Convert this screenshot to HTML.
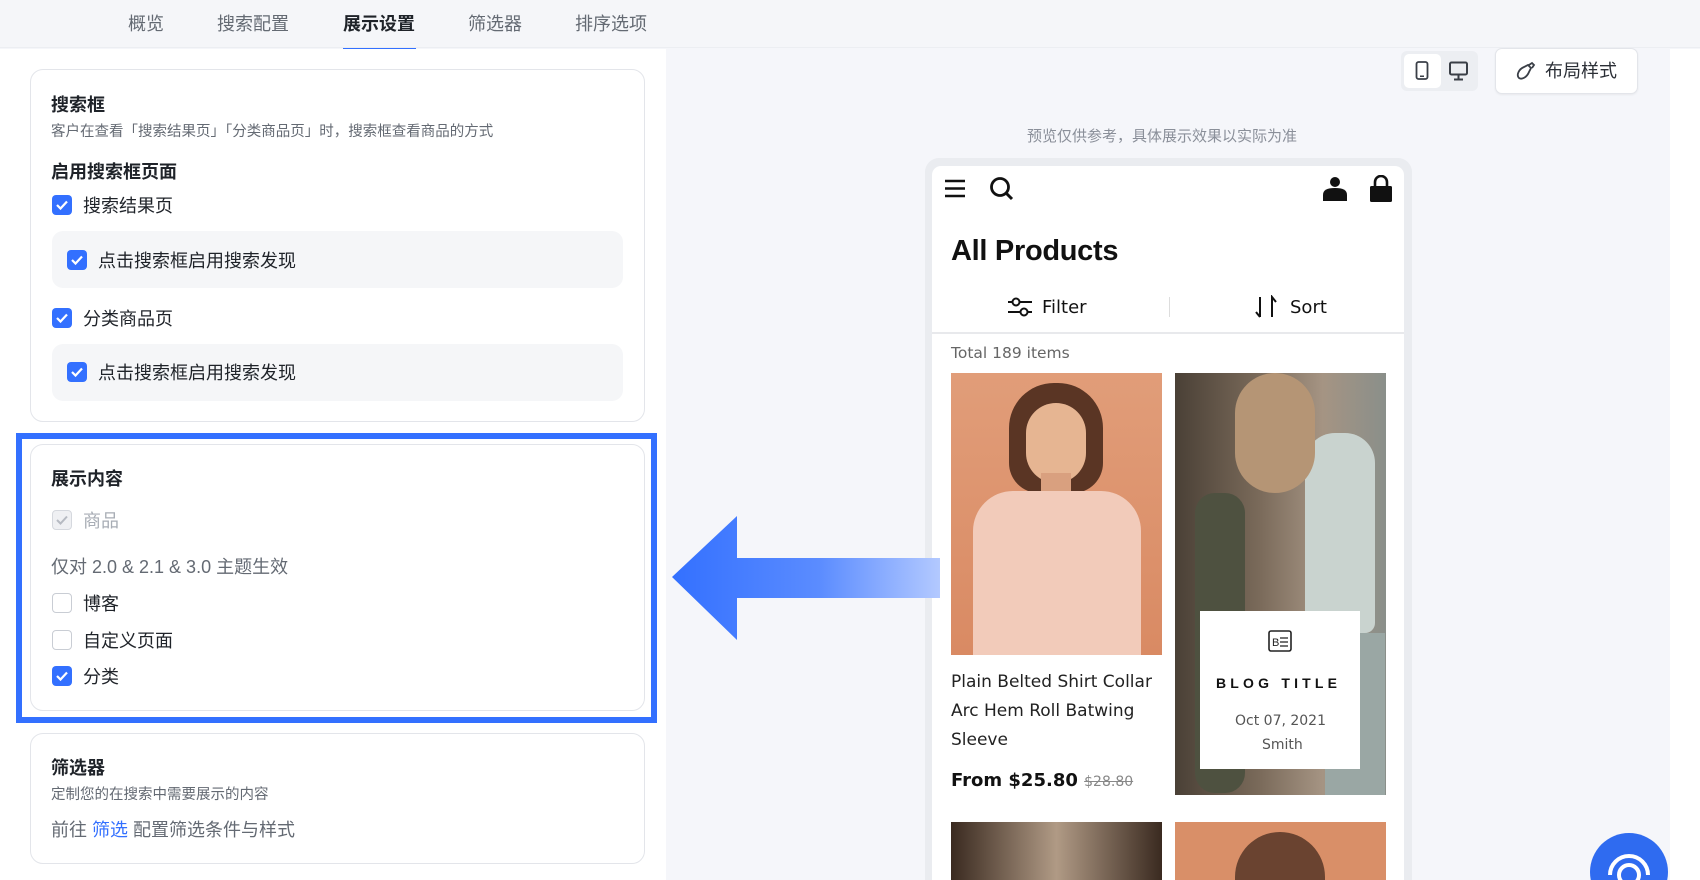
<!DOCTYPE html>
<html style="width:1700px;height:880px;overflow:hidden"><head><meta charset="utf-8">
<style>
*{margin:0;padding:0;box-sizing:border-box}
body{width:1700px;height:880px;overflow:hidden;position:relative;background:#f5f6fa;font-family:"Liberation Sans","Noto Sans CJK SC",sans-serif;color:#1f2329}
.a{position:absolute}
.t{position:absolute;white-space:nowrap;line-height:1}
.card{position:absolute;background:#fff;border:1.5px solid #e3e5ea;border-radius:13px}
.cb{position:absolute;width:20px;height:20px;border-radius:4px;background:#3370ff}
.cb svg{position:absolute;left:3px;top:4px}
.cbo{position:absolute;width:20px;height:20px;border-radius:4px;border:1.5px solid #c9cdd4;background:#fff}
.grey{position:absolute;background:#f5f6f8;border-radius:11px}
.b{font-weight:bold}
.pop{font-family:"DejaVu Sans","Liberation Sans",sans-serif}
#clip{position:absolute;left:0;top:0;width:1700px;height:880px;overflow:hidden}
</style></head><body><div id="clip">
<div class="a" style="left:0;top:0;width:1700px;height:48px;background:#f5f6f9;border-bottom:1px solid #eceef2"></div>
<div class="t" style="left:128px;top:15px;font-size:18px;color:#646a73">概览</div>
<div class="t" style="left:217px;top:15px;font-size:18px;color:#646a73">搜索配置</div>
<div class="t b" style="left:343px;top:15px;font-size:18px;color:#1f2329">展示设置</div>
<div class="a" style="left:343px;top:48px;width:73px;height:3px;background:#3370ff"></div>
<div class="t" style="left:468px;top:15px;font-size:18px;color:#646a73">筛选器</div>
<div class="t" style="left:575px;top:15px;font-size:18px;color:#646a73">排序选项</div>
<div class="a" style="left:0;top:49px;width:666px;height:831px;background:#fff"></div>
<div class="a" style="left:1670px;top:49px;width:30px;height:831px;background:#fff"></div>

<div class="card" style="left:30px;top:69px;width:615px;height:353px"></div>
<div class="t b" style="left:51px;top:96px;font-size:18px">搜索框</div>
<div class="t" style="left:51px;top:125px;font-size:14.5px;color:#646a73">客户在查看「搜索结果页」「分类商品页」时，搜索框查看商品的方式</div>
<div class="t b" style="left:51px;top:163px;font-size:18px">启用搜索框页面</div>
<div class="cb" style="left:52px;top:195px"><svg width="14" height="12"><path d="M2 6l3.5 3.5L12 2.5" stroke="#fff" stroke-width="2.2" fill="none"/></svg></div>
<div class="t" style="left:83px;top:197px;font-size:18px;color:#1f2329">搜索结果页</div>
<div class="grey" style="left:52px;top:231px;width:571px;height:57px"></div>
<div class="cb" style="left:67px;top:250px"><svg width="14" height="12"><path d="M2 6l3.5 3.5L12 2.5" stroke="#fff" stroke-width="2.2" fill="none"/></svg></div>
<div class="t" style="left:98px;top:252px;font-size:18px">点击搜索框启用搜索发现</div>
<div class="cb" style="left:52px;top:308px"><svg width="14" height="12"><path d="M2 6l3.5 3.5L12 2.5" stroke="#fff" stroke-width="2.2" fill="none"/></svg></div>
<div class="t" style="left:83px;top:310px;font-size:18px">分类商品页</div>
<div class="grey" style="left:52px;top:344px;width:571px;height:57px"></div>
<div class="cb" style="left:67px;top:362px"><svg width="14" height="12"><path d="M2 6l3.5 3.5L12 2.5" stroke="#fff" stroke-width="2.2" fill="none"/></svg></div>
<div class="t" style="left:98px;top:364px;font-size:18px">点击搜索框启用搜索发现</div>

<div class="a" style="left:16px;top:433px;width:641px;height:290px;border:6px solid #3370ff"></div>
<div class="card" style="left:30px;top:444px;width:615px;height:267px"></div>
<div class="t b" style="left:51px;top:470px;font-size:18px">展示内容</div>
<div class="a" style="left:52px;top:510px;width:20px;height:20px;border-radius:4px;background:#eff0f3;border:1.5px solid #d5d8de"><svg width="14" height="12" style="position:absolute;left:2px;top:3px"><path d="M2 6l3.5 3.5L12 2.5" stroke="#b6bac2" stroke-width="2" fill="none"/></svg></div>
<div class="t" style="left:83px;top:512px;font-size:18px;color:#a8adb5">商品</div>
<div class="t" style="left:51px;top:558px;font-size:18px;color:#646a73">仅对 2.0 &amp; 2.1 &amp; 3.0 主题生效</div>
<div class="cbo" style="left:52px;top:593px"></div>
<div class="t" style="left:83px;top:595px;font-size:18px">博客</div>
<div class="cbo" style="left:52px;top:630px"></div>
<div class="t" style="left:83px;top:632px;font-size:18px">自定义页面</div>
<div class="cb" style="left:52px;top:666px"><svg width="14" height="12"><path d="M2 6l3.5 3.5L12 2.5" stroke="#fff" stroke-width="2.2" fill="none"/></svg></div>
<div class="t" style="left:83px;top:668px;font-size:18px">分类</div>

<div class="card" style="left:30px;top:733px;width:615px;height:131px"></div>
<div class="t b" style="left:51px;top:759px;font-size:18px">筛选器</div>
<div class="t" style="left:51px;top:788px;font-size:14.5px;color:#646a73">定制您的在搜索中需要展示的内容</div>
<div class="t" style="left:51px;top:821px;font-size:18px;color:#646a73">前往 <span style="color:#3370ff">筛选</span> 配置筛选条件与样式</div>

<div class="a" style="left:1401px;top:51px;width:77px;height:40px;background:#eceef2;border-radius:6px"></div>
<div class="a" style="left:1404px;top:54px;width:37px;height:34px;background:#fff;border-radius:5px"></div>
<svg class="a" style="left:1413px;top:61px" width="18" height="20"><rect x="3.5" y="1" width="11" height="17" rx="2" fill="none" stroke="#3a3f47" stroke-width="1.8"/><rect x="7" y="14.5" width="4" height="1.5" fill="#3a3f47"/></svg>
<svg class="a" style="left:1448px;top:61px" width="22" height="20"><rect x="2" y="1.5" width="17" height="12" rx="1.5" fill="none" stroke="#3a3f47" stroke-width="2"/><path d="M10.5 14v4M6 18.5h9" stroke="#3a3f47" stroke-width="2"/></svg>
<div class="a" style="left:1495px;top:48px;width:143px;height:46px;background:#fff;border:1px solid #e3e5ea;border-radius:7px;box-shadow:0 1px 2px rgba(0,0,0,.06)"></div>
<svg class="a" style="left:1515px;top:61px" width="22" height="20"><path d="M4 17c-3-3 0-9 5-11l4-2 3 3-2 4c-2 5-7 8-10 6z M14 4l3-2 2 2-2 3" fill="none" stroke="#3a3f47" stroke-width="1.8"/></svg>
<div class="t" style="left:1545px;top:62px;font-size:18px;color:#2b2f36">布局样式</div>

<div class="t" style="left:1027px;top:129px;font-size:15px;color:#8a8f99">预览仅供参考，具体展示效果以实际为准</div>

<div class="a" style="left:925px;top:158px;width:487px;height:722px;background:#eaecf0;border-radius:14px 14px 0 0"></div>
<div class="a" style="left:932px;top:166px;width:472px;height:714px;background:#fff;border-radius:9px 9px 0 0"></div>
<svg class="a" style="left:944px;top:178px" width="24" height="22"><path d="M1 3h20M1 10.5h20M1 18h20" stroke="#111" stroke-width="2.6"/></svg>
<svg class="a" style="left:989px;top:176px" width="28" height="28"><circle cx="11" cy="11" r="8.5" fill="none" stroke="#111" stroke-width="2.8"/><path d="M17 17l6 6" stroke="#111" stroke-width="3"/></svg>
<svg class="a" style="left:1322px;top:176px" width="26" height="26"><circle cx="13" cy="6" r="5" fill="#111"/><path d="M1 25v-6c0-5 4-7 12-7s12 2 12 7v6z" fill="#111"/></svg>
<svg class="a" style="left:1368px;top:175px" width="26" height="28"><path d="M7 11V7a6 6 0 0 1 12 0v4" fill="none" stroke="#111" stroke-width="2.6"/><rect x="2" y="11" width="22" height="16" rx="1.5" fill="#111"/></svg>
<div class="t b" style="left:951px;top:237px;font-size:29px;color:#111;letter-spacing:-0.3px">All Products</div>
<svg class="a" style="left:1007px;top:296px" width="26" height="22"><path d="M1 6h24M1 16h24" stroke="#111" stroke-width="2"/><circle cx="9" cy="6" r="3.5" fill="#fff" stroke="#111" stroke-width="2"/><circle cx="17" cy="16" r="3.5" fill="#fff" stroke="#111" stroke-width="2"/></svg>
<div class="t pop" style="left:1042px;top:299px;font-size:18px;color:#111">Filter</div>
<div class="a" style="left:1169px;top:297px;width:1px;height:20px;background:#ddd"></div>
<svg class="a" style="left:1254px;top:295px" width="24" height="24"><path d="M6 2v20M2 17l4 5M18 22V2l4 5" fill="none" stroke="#111" stroke-width="2"/></svg>
<div class="t pop" style="left:1290px;top:299px;font-size:18px;color:#111">Sort</div>
<div class="a" style="left:932px;top:332px;width:472px;height:2px;background:#e8e9ec"></div>
<div class="t pop" style="left:951px;top:346px;font-size:15.5px;color:#666">Total 189 items</div>

<div class="a" style="left:951px;top:373px;width:211px;height:282px;background:linear-gradient(180deg,#e19d79,#d98a63);overflow:hidden">
 <div class="a" style="left:58px;top:10px;width:94px;height:110px;border-radius:45px 45px 30px 30px;background:#5a3524"></div>
 <div class="a" style="left:75px;top:30px;width:60px;height:80px;border-radius:30px;background:#e6b592"></div>
 <div class="a" style="left:90px;top:100px;width:30px;height:30px;background:#d9a07f"></div>
 <div class="a" style="left:22px;top:118px;width:168px;height:170px;border-radius:40px 40px 0 0;background:#f2cbba"></div>
</div>
<div class="t pop" style="left:951px;top:674px;font-size:17px;color:#222">Plain Belted Shirt Collar</div>
<div class="t pop" style="left:951px;top:703px;font-size:17px;color:#222">Arc Hem Roll Batwing</div>
<div class="t pop" style="left:951px;top:732px;font-size:17px;color:#222">Sleeve</div>
<div class="t pop b" style="left:951px;top:772px;font-size:18px;color:#111">From $25.80 <span style="font-weight:normal;font-size:14px;color:#888;text-decoration:line-through">$28.80</span></div>

<div class="a" style="left:1175px;top:373px;width:211px;height:422px;background:linear-gradient(90deg,#4a4036,#7a6a5a 40%,#a59483 70%,#8a8f8a);overflow:hidden">
 <div class="a" style="left:20px;top:120px;width:50px;height:300px;background:#4e5140;border-radius:20px"></div>
 <div class="a" style="left:130px;top:60px;width:70px;height:200px;background:#c9d3cf;border-radius:30px 30px 10px 10px"></div>
 <div class="a" style="left:60px;top:0;width:80px;height:120px;background:#b59575;border-radius:40px"></div>
 <div class="a" style="left:150px;top:260px;width:60px;height:170px;background:#9aa7a4"></div>
</div>
<div class="a" style="left:1200px;top:611px;width:160px;height:158px;background:#fff"></div>
<svg class="a" style="left:1268px;top:630px" width="24" height="22"><rect x="1" y="1" width="22" height="20" rx="2" fill="none" stroke="#222" stroke-width="1.6"/><text x="4" y="16" font-size="11" font-family="Liberation Sans" fill="#222">B</text><path d="M12 8h8M12 12h8M12 16h8" stroke="#222" stroke-width="1.2"/></svg>
<div class="t b" style="left:1216px;top:676px;font-size:14px;letter-spacing:4.2px;color:#111">BLOG TITLE</div>
<div class="t pop" style="left:1235px;top:714px;font-size:14px;color:#555">Oct 07, 2021</div>
<div class="t pop" style="left:1262px;top:738px;font-size:14px;color:#555">Smith</div>

<div class="a" style="left:951px;top:822px;width:211px;height:58px;background:linear-gradient(90deg,#3a2a20,#b09a85,#3a2a20)"></div>
<div class="a" style="left:1175px;top:822px;width:211px;height:58px;background:#d98f68;overflow:hidden"><div class="a" style="left:60px;top:10px;width:90px;height:60px;border-radius:45px 45px 0 0;background:#6a4330"></div></div>

<svg class="a" style="left:670px;top:514px;z-index:5" width="280" height="128">
<defs><linearGradient id="g" x1="0" x2="1"><stop offset="0" stop-color="#3370ff"/><stop offset="0.55" stop-color="#5b8cff"/><stop offset="1" stop-color="#b3c9ff"/></linearGradient></defs>
<path d="M2 63 L67 2 L67 44 L270 44 L270 84 L67 84 L67 126 Z" fill="url(#g)"/>
</svg>

<div class="a" style="left:1590px;top:833px;width:78px;height:78px;border-radius:50%;background:#2f6bf0"></div>
<svg class="a" style="left:1602px;top:845px" width="54" height="35"><path d="M8 30a19 19 0 0 1 38 0" fill="none" stroke="#fff" stroke-width="4"/><circle cx="27" cy="30" r="10" fill="none" stroke="#fff" stroke-width="4"/></svg>
</div></body></html>
